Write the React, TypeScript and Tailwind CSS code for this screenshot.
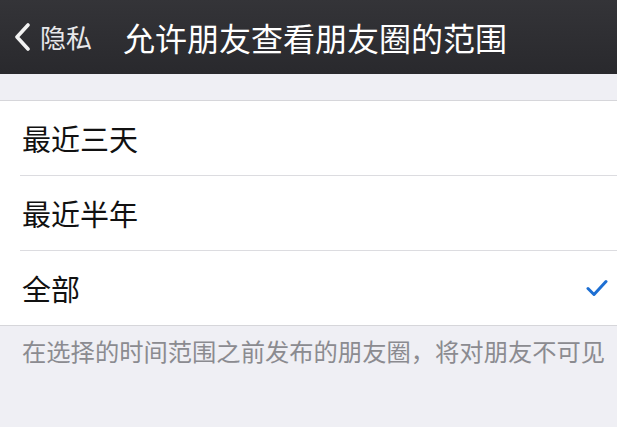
const options = [
    { id: 1, title: '最近三天' },
    { id: 2, title: '最近半年' },
    { id: 3, title: '全部' },
]

const cjk = { fontFamily: '"Noto Sans CJK SC", "Noto Sans", sans-serif' }

export default function App() {
    const selected = 3
    return (
        <div className="w-[617px] h-[427px] bg-[#efeff4] overflow-hidden" style={cjk}>
            <div className="h-[74px] bg-gradient-to-b from-[#343438] to-[#29292d] flex items-center">
                <div className="flex items-center pl-[13px] w-[123px]">
                    <svg width="18" height="28" viewBox="0 0 18 28" className="shrink-0">
                        <path d="M15 2 L4 14 L15 26" fill="none" stroke="#f2f2f2" strokeWidth="3.6" strokeLinecap="round" strokeLinejoin="round" />
                    </svg>
                    <span className="ml-[9px] text-[26px] leading-none text-[#e8e8ea]">隐私</span>
                </div>
                <span className="text-[32px] leading-none text-white">允许朋友查看朋友圈的范围</span>
            </div>

            <div className="h-[26px]" />

            <div className="bg-white border-t border-b border-[#d6d6da]">
                {
                    options.map((item, index) => (
                        <div key={item.id} className="pl-[20px]">
                            <div className={`${index < options.length - 1 ? 'border-b border-[#dcdce0] h-[75px]' : 'h-[74px]'} flex items-center justify-between pr-[9px]`}>
                                <span className="pl-[2px] text-[29px] leading-none text-[#111]">{item.title}</span>
                                {
                                    selected === item.id &&
                                    <svg width="22" height="18" viewBox="0 0 22 18">
                                        <path d="M2 9.5 L8 15.5 L20 2.5" fill="none" stroke="#1d6fd3" strokeWidth="3" strokeLinecap="round" strokeLinejoin="round" />
                                    </svg>
                                }
                            </div>
                        </div>
                    ))
                }
            </div>

            <div className="pl-[22px] pt-[11px] text-[24.3px] leading-[28px] text-[#8b8b90] whitespace-nowrap">
                在选择的时间范围之前发布的朋友圈，将对朋友不可见
            </div>
        </div>
    )
}
